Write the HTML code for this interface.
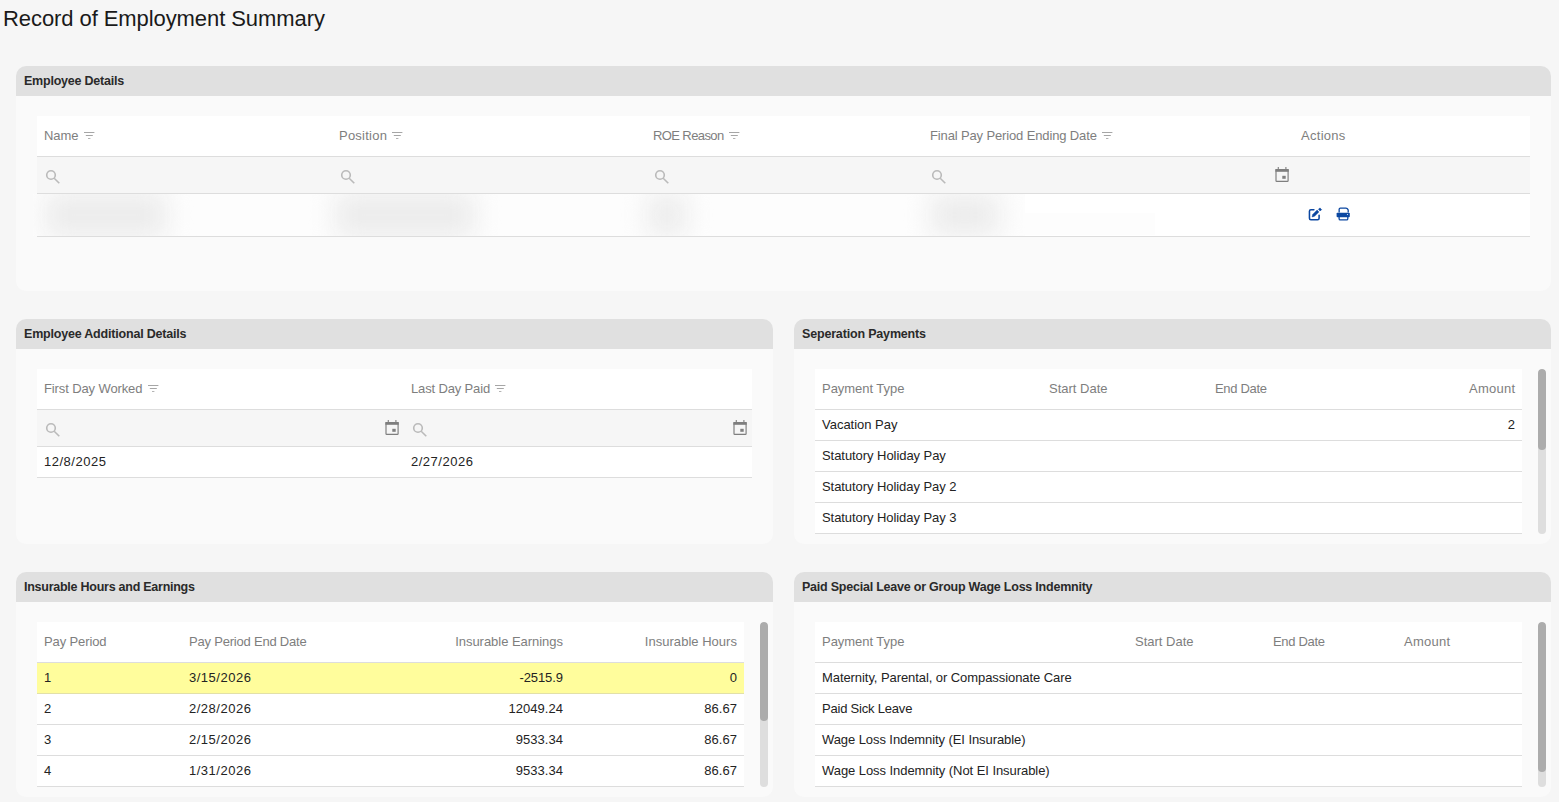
<!DOCTYPE html>
<html><head><meta charset="utf-8">
<style>
*{box-sizing:border-box;margin:0;padding:0}
html,body{width:1559px;height:802px;overflow:hidden;background:#f6f6f6;font-family:"Liberation Sans",sans-serif;color:#212121}
.ttl{position:absolute;font-size:22px;color:#1a1a1a;white-space:nowrap}
.card{position:absolute;background:#fafafa;border-radius:10px;overflow:hidden}
.chd{position:absolute;left:0;top:0;right:0;height:30px;background:#e0e0e0}
.hd{position:absolute;font-weight:bold;font-size:12.5px;color:#2a2a2a;white-space:nowrap}
.r{position:absolute}
.th{position:absolute;font-weight:normal;font-size:13px;color:#7e7e7e;white-space:nowrap}
.td{position:absolute;font-size:13px;color:#232323;white-space:nowrap}
.ic{position:absolute}
.sb{position:absolute;width:8px;border-radius:4px;background:#dedede;overflow:hidden}
.sb i{position:absolute;left:0;width:8px;border-radius:4px;background:#acacac}
.blob{position:absolute;background:#ececec;filter:blur(13px);border-radius:6px}
</style></head><body>

<div class="ttl" style="left:3px;top:5px;height:28px;line-height:28px;transform-origin:0 50%;letter-spacing:-0.077px;margin-right:0.077px">Record of Employment Summary</div>
<div class="card" style="left:16px;top:66px;width:1535px;height:225px"><div class="chd"></div></div>
<div class="hd" style="left:24px;top:66px;height:30px;line-height:30px;transform-origin:0 50%;letter-spacing:-0.226px;margin-right:0.226px">Employee Details</div>
<div class="r" style="left:37px;top:116px;width:1493px;height:40px;background:#fff"></div>
<div class="r" style="left:37px;top:156px;width:1493px;height:1px;background:#dddddd"></div>
<div class="r" style="left:37px;top:157px;width:1493px;height:36px;background:#f6f6f6"></div>
<div class="r" style="left:37px;top:193px;width:1493px;height:1px;background:#dddddd"></div>
<div class="r" style="left:37px;top:194px;width:1493px;height:42px;background:#fff"></div>
<div class="r" style="left:37px;top:236px;width:1493px;height:1px;background:#dddddd"></div>
<div class="r" style="left:1025px;top:213px;width:130px;height:22px;background:#fdfdfd"></div>
<div class="r" style="left:33px;top:194px;width:992px;height:42px;overflow:hidden;background:#fdfdfd"><div class="blob" style="left:12px;top:-2px;width:122px;height:46px"></div><div class="blob" style="left:302px;top:-2px;width:140px;height:46px"></div><div class="blob" style="left:614px;top:0px;width:40px;height:42px"></div><div class="blob" style="left:897px;top:0px;width:70px;height:42px"></div></div></div>
<div class="th" style="left:44px;top:116px;height:40px;line-height:40px;transform-origin:0 50%;letter-spacing:-0.052px;margin-right:0.052px">Name</div>
<svg class="ic" style="left:84px;top:132px" width="11" height="8" viewBox="0 0 11 8"><rect x="0" y="0" width="10.4" height="1" fill="#a6a6a6"/><rect x="1.8" y="3" width="7" height="1" fill="#a6a6a6"/><rect x="4" y="6" width="2.4" height="1" fill="#b4b4b4"/></svg>
<div class="th" style="left:339px;top:116px;height:40px;line-height:40px;transform-origin:0 50%;letter-spacing:0.230px;margin-right:-0.230px">Position</div>
<svg class="ic" style="left:392px;top:132px" width="11" height="8" viewBox="0 0 11 8"><rect x="0" y="0" width="10.4" height="1" fill="#a6a6a6"/><rect x="1.8" y="3" width="7" height="1" fill="#a6a6a6"/><rect x="4" y="6" width="2.4" height="1" fill="#b4b4b4"/></svg>
<div class="th" style="left:653px;top:116px;height:40px;line-height:40px;transform-origin:0 50%;letter-spacing:-0.602px;margin-right:0.602px">ROE Reason</div>
<svg class="ic" style="left:729px;top:132px" width="11" height="8" viewBox="0 0 11 8"><rect x="0" y="0" width="10.4" height="1" fill="#a6a6a6"/><rect x="1.8" y="3" width="7" height="1" fill="#a6a6a6"/><rect x="4" y="6" width="2.4" height="1" fill="#b4b4b4"/></svg>
<div class="th" style="left:930px;top:116px;height:40px;line-height:40px;transform-origin:0 50%;letter-spacing:-0.136px;margin-right:0.136px">Final Pay Period Ending Date</div>
<svg class="ic" style="left:1102px;top:132px" width="11" height="8" viewBox="0 0 11 8"><rect x="0" y="0" width="10.4" height="1" fill="#a6a6a6"/><rect x="1.8" y="3" width="7" height="1" fill="#a6a6a6"/><rect x="4" y="6" width="2.4" height="1" fill="#b4b4b4"/></svg>
<div class="th" style="left:1301px;top:116px;height:40px;line-height:40px;transform-origin:0 50%;letter-spacing:0.286px;margin-right:-0.286px">Actions</div>
<svg class="ic" style="left:43.8px;top:168.0px" width="17" height="17" viewBox="0 0 17 17"><circle cx="7" cy="7" r="4.3" fill="none" stroke="#bababa" stroke-width="1.6"/><path d="M10.2 10.2L15.3 15.2" stroke="#bababa" stroke-width="1.6"/></svg>
<svg class="ic" style="left:338.8px;top:168.0px" width="17" height="17" viewBox="0 0 17 17"><circle cx="7" cy="7" r="4.3" fill="none" stroke="#bababa" stroke-width="1.6"/><path d="M10.2 10.2L15.3 15.2" stroke="#bababa" stroke-width="1.6"/></svg>
<svg class="ic" style="left:652.8px;top:168.0px" width="17" height="17" viewBox="0 0 17 17"><circle cx="7" cy="7" r="4.3" fill="none" stroke="#bababa" stroke-width="1.6"/><path d="M10.2 10.2L15.3 15.2" stroke="#bababa" stroke-width="1.6"/></svg>
<svg class="ic" style="left:929.8px;top:168.0px" width="17" height="17" viewBox="0 0 17 17"><circle cx="7" cy="7" r="4.3" fill="none" stroke="#bababa" stroke-width="1.6"/><path d="M10.2 10.2L15.3 15.2" stroke="#bababa" stroke-width="1.6"/></svg>
<svg class="ic" style="left:1270.0px;top:162.1px" width="24" height="24" viewBox="0 0 24 24"><rect x="6" y="7.6" width="12.1" height="11.75" rx="0.7" fill="none" stroke="#7e7e7e" stroke-width="1.15"/><rect x="5.4" y="7" width="13.3" height="2.8" fill="#7e7e7e"/><rect x="7.7" y="5" width="1.2" height="2.1" fill="#888"/><rect x="15.3" y="5" width="1.2" height="2.1" fill="#888"/><rect x="12.3" y="13.8" width="3.4" height="3" fill="#808080"/></svg>
<svg class="ic" style="left:1302px;top:202px" width="54" height="24" viewBox="0 0 54 24">
<path d="M11.9 7.8H8.9c-.8 0-1.45.65-1.45 1.45v7.1c0 .8.65 1.45 1.45 1.45h6.75c.8 0 1.45-.65 1.45-1.45V13.3" fill="none" stroke="#0b47a1" stroke-width="1.55" stroke-linecap="round"/>
<path d="M10.1 14.9L10.7 12.5L15.1 8.1L16.9 9.9L12.5 14.3Z" fill="#0b47a1" stroke="#0b47a1" stroke-width="0.5" stroke-linejoin="round"/>
<path d="M19.6 7.6L17.9 5.9L16.5 7.3L18.2 9Z" fill="#0b47a1" stroke="#0b47a1" stroke-width="0.6" stroke-linejoin="round"/>
<path d="M37.15 10.6V7.3c0-.8.5-1.2 1.2-1.2h5.6c.5 0 .8.15 1.1.45l.7.7c.3.3.45.65.45 1.1V10.6" fill="none" stroke="#0b47a1" stroke-width="1.3"/>
<rect x="34.6" y="10.7" width="13.2" height="4.5" rx="0.9" fill="#0b47a1"/>
<circle cx="45.5" cy="12.5" r="0.6" fill="#e8f0ff"/>
<path d="M37.1 14.5v2.2c0 .7.5 1.2 1.2 1.2h6.3c.7 0 1.2-.5 1.2-1.2V14.5" fill="none" stroke="#0b47a1" stroke-width="1.3"/>
</svg>
<div class="card" style="left:16px;top:319px;width:757px;height:225px"><div class="chd"></div></div>
<div class="hd" style="left:24px;top:319px;height:30px;line-height:30px;transform-origin:0 50%;letter-spacing:-0.197px;margin-right:0.197px">Employee Additional Details</div>
<div class="r" style="left:37px;top:369px;width:715px;height:40px;background:#fff"></div>
<div class="r" style="left:37px;top:409px;width:715px;height:1px;background:#dddddd"></div>
<div class="r" style="left:37px;top:410px;width:715px;height:36px;background:#f6f6f6"></div>
<div class="r" style="left:37px;top:446px;width:715px;height:1px;background:#dddddd"></div>
<div class="r" style="left:37px;top:447px;width:715px;height:30px;background:#fff"></div>
<div class="r" style="left:37px;top:477px;width:715px;height:1px;background:#dddddd"></div>
<div class="th" style="left:44px;top:369px;height:40px;line-height:40px;transform-origin:0 50%;letter-spacing:-0.113px;margin-right:0.113px">First Day Worked</div>
<svg class="ic" style="left:148px;top:385px" width="11" height="8" viewBox="0 0 11 8"><rect x="0" y="0" width="10.4" height="1" fill="#a6a6a6"/><rect x="1.8" y="3" width="7" height="1" fill="#a6a6a6"/><rect x="4" y="6" width="2.4" height="1" fill="#b4b4b4"/></svg>
<div class="th" style="left:411px;top:369px;height:40px;line-height:40px;transform-origin:0 50%;letter-spacing:-0.148px;margin-right:0.148px">Last Day Paid</div>
<svg class="ic" style="left:495px;top:385px" width="11" height="8" viewBox="0 0 11 8"><rect x="0" y="0" width="10.4" height="1" fill="#a6a6a6"/><rect x="1.8" y="3" width="7" height="1" fill="#a6a6a6"/><rect x="4" y="6" width="2.4" height="1" fill="#b4b4b4"/></svg>
<svg class="ic" style="left:44.05px;top:421.0px" width="17" height="17" viewBox="0 0 17 17"><circle cx="7" cy="7" r="4.3" fill="none" stroke="#bababa" stroke-width="1.6"/><path d="M10.2 10.2L15.3 15.2" stroke="#bababa" stroke-width="1.6"/></svg>
<svg class="ic" style="left:411.05px;top:421.0px" width="17" height="17" viewBox="0 0 17 17"><circle cx="7" cy="7" r="4.3" fill="none" stroke="#bababa" stroke-width="1.6"/><path d="M10.2 10.2L15.3 15.2" stroke="#bababa" stroke-width="1.6"/></svg>
<svg class="ic" style="left:379.90000000000003px;top:415.20000000000005px" width="24" height="24" viewBox="0 0 24 24"><rect x="6" y="7.6" width="12.1" height="11.75" rx="0.7" fill="none" stroke="#7e7e7e" stroke-width="1.15"/><rect x="5.4" y="7" width="13.3" height="2.8" fill="#7e7e7e"/><rect x="7.7" y="5" width="1.2" height="2.1" fill="#888"/><rect x="15.3" y="5" width="1.2" height="2.1" fill="#888"/><rect x="12.3" y="13.8" width="3.4" height="3" fill="#808080"/></svg>
<svg class="ic" style="left:727.9px;top:415.20000000000005px" width="24" height="24" viewBox="0 0 24 24"><rect x="6" y="7.6" width="12.1" height="11.75" rx="0.7" fill="none" stroke="#7e7e7e" stroke-width="1.15"/><rect x="5.4" y="7" width="13.3" height="2.8" fill="#7e7e7e"/><rect x="7.7" y="5" width="1.2" height="2.1" fill="#888"/><rect x="15.3" y="5" width="1.2" height="2.1" fill="#888"/><rect x="12.3" y="13.8" width="3.4" height="3" fill="#808080"/></svg>
<div class="td" style="left:44px;top:447px;height:30px;line-height:30px;transform-origin:0 50%;letter-spacing:0.504px;margin-right:-0.504px">12/8/2025</div>
<div class="td" style="left:411px;top:447px;height:30px;line-height:30px;transform-origin:0 50%;letter-spacing:0.504px;margin-right:-0.504px">2/27/2026</div>
<div class="card" style="left:794px;top:319px;width:757px;height:225px"><div class="chd"></div></div>
<div class="hd" style="left:802px;top:319px;height:30px;line-height:30px;transform-origin:0 50%;letter-spacing:-0.174px;margin-right:0.174px">Seperation Payments</div>
<div class="r" style="left:815px;top:369px;width:707px;height:164px;background:#fff"></div>
<div class="r" style="left:815px;top:409px;width:707px;height:1px;background:#dddddd"></div>
<div class="r" style="left:815px;top:440px;width:707px;height:1px;background:#dddddd"></div>
<div class="r" style="left:815px;top:471px;width:707px;height:1px;background:#dddddd"></div>
<div class="r" style="left:815px;top:502px;width:707px;height:1px;background:#dddddd"></div>
<div class="r" style="left:815px;top:533px;width:707px;height:1px;background:#dddddd"></div>
<div class="th" style="left:822px;top:369px;height:40px;line-height:40px;transform-origin:0 50%;letter-spacing:-0.045px;margin-right:0.045px">Payment Type</div>
<div class="th" style="left:1049px;top:369px;height:40px;line-height:40px;transform-origin:0 50%;letter-spacing:-0.007px;margin-right:0.007px">Start Date</div>
<div class="th" style="left:1215px;top:369px;height:40px;line-height:40px;transform-origin:0 50%;letter-spacing:-0.324px;margin-right:0.324px">End Date</div>
<div class="th" style="right:44px;top:369px;height:40px;line-height:40px;text-align:right;transform-origin:100% 50%;letter-spacing:0.241px;margin-right:-0.241px">Amount</div>
<div class="td" style="left:822px;top:410px;height:30px;line-height:30px;transform-origin:0 50%;letter-spacing:-0.018px;margin-right:0.018px">Vacation Pay</div>
<div class="td" style="left:822px;top:441px;height:30px;line-height:30px;transform-origin:0 50%;letter-spacing:-0.058px;margin-right:0.058px">Statutory Holiday Pay</div>
<div class="td" style="left:822px;top:472px;height:30px;line-height:30px;transform-origin:0 50%;letter-spacing:-0.067px;margin-right:0.067px">Statutory Holiday Pay 2</div>
<div class="td" style="left:822px;top:503px;height:30px;line-height:30px;transform-origin:0 50%;letter-spacing:-0.067px;margin-right:0.067px">Statutory Holiday Pay 3</div>
<div class="td" style="right:44px;top:410px;height:30px;line-height:30px;text-align:right;transform-origin:100% 50%;letter-spacing:0.078px;margin-right:-0.078px">2</div>
<div class="sb" style="left:1538px;top:369px;height:165px"><i style="top:0;height:81px"></i></div>
<div class="card" style="left:16px;top:572px;width:757px;height:225px"><div class="chd"></div></div>
<div class="hd" style="left:24px;top:572px;height:30px;line-height:30px;transform-origin:0 50%;letter-spacing:-0.254px;margin-right:0.254px">Insurable Hours and Earnings</div>
<div class="r" style="left:37px;top:622px;width:707px;height:164px;background:#fff"></div>
<div class="r" style="left:37px;top:662px;width:707px;height:1px;background:#dddddd"></div>
<div class="r" style="left:37px;top:663px;width:707px;height:30px;background:#fffd9c"></div>
<div class="r" style="left:37px;top:693px;width:707px;height:1px;background:#e2e0a8"></div>
<div class="r" style="left:37px;top:724px;width:707px;height:1px;background:#dddddd"></div>
<div class="r" style="left:37px;top:755px;width:707px;height:1px;background:#dddddd"></div>
<div class="r" style="left:37px;top:786px;width:707px;height:1px;background:#dddddd"></div>
<div class="th" style="left:44px;top:622px;height:40px;line-height:40px;transform-origin:0 50%;letter-spacing:-0.118px;margin-right:0.118px">Pay Period</div>
<div class="th" style="left:189px;top:622px;height:40px;line-height:40px;transform-origin:0 50%;letter-spacing:-0.207px;margin-right:0.207px">Pay Period End Date</div>
<div class="th" style="right:996px;top:622px;height:40px;line-height:40px;text-align:right;transform-origin:100% 50%;letter-spacing:-0.034px;margin-right:0.034px">Insurable Earnings</div>
<div class="th" style="right:822px;top:622px;height:40px;line-height:40px;text-align:right;transform-origin:100% 50%;letter-spacing:0.026px;margin-right:-0.026px">Insurable Hours</div>
<div class="td" style="left:44px;top:663px;height:30px;line-height:30px;transform-origin:0 50%;letter-spacing:0.078px;margin-right:-0.078px">1</div>
<div class="td" style="left:189px;top:663px;height:30px;line-height:30px;transform-origin:0 50%;letter-spacing:0.504px;margin-right:-0.504px">3/15/2026</div>
<div class="td" style="right:996px;top:663px;height:30px;line-height:30px;text-align:right;transform-origin:100% 50%;letter-spacing:-0.089px;margin-right:0.089px">-2515.9</div>
<div class="td" style="right:822px;top:663px;height:30px;line-height:30px;text-align:right;transform-origin:100% 50%;letter-spacing:0.078px;margin-right:-0.078px">0</div>
<div class="td" style="left:44px;top:694px;height:30px;line-height:30px;transform-origin:0 50%;letter-spacing:0.078px;margin-right:-0.078px">2</div>
<div class="td" style="left:189px;top:694px;height:30px;line-height:30px;transform-origin:0 50%;letter-spacing:0.504px;margin-right:-0.504px">2/28/2026</div>
<div class="td" style="right:996px;top:694px;height:30px;line-height:30px;text-align:right;transform-origin:100% 50%;letter-spacing:0.049px;margin-right:-0.049px">12049.24</div>
<div class="td" style="right:822px;top:694px;height:30px;line-height:30px;text-align:right;transform-origin:100% 50%;letter-spacing:0.027px;margin-right:-0.027px">86.67</div>
<div class="td" style="left:44px;top:725px;height:30px;line-height:30px;transform-origin:0 50%;letter-spacing:0.078px;margin-right:-0.078px">3</div>
<div class="td" style="left:189px;top:725px;height:30px;line-height:30px;transform-origin:0 50%;letter-spacing:0.504px;margin-right:-0.504px">2/15/2026</div>
<div class="td" style="right:996px;top:725px;height:30px;line-height:30px;text-align:right;transform-origin:100% 50%;letter-spacing:0.044px;margin-right:-0.044px">9533.34</div>
<div class="td" style="right:822px;top:725px;height:30px;line-height:30px;text-align:right;transform-origin:100% 50%;letter-spacing:0.027px;margin-right:-0.027px">86.67</div>
<div class="td" style="left:44px;top:756px;height:30px;line-height:30px;transform-origin:0 50%;letter-spacing:0.078px;margin-right:-0.078px">4</div>
<div class="td" style="left:189px;top:756px;height:30px;line-height:30px;transform-origin:0 50%;letter-spacing:0.504px;margin-right:-0.504px">1/31/2026</div>
<div class="td" style="right:996px;top:756px;height:30px;line-height:30px;text-align:right;transform-origin:100% 50%;letter-spacing:0.044px;margin-right:-0.044px">9533.34</div>
<div class="td" style="right:822px;top:756px;height:30px;line-height:30px;text-align:right;transform-origin:100% 50%;letter-spacing:0.027px;margin-right:-0.027px">86.67</div>
<div class="sb" style="left:760px;top:622px;height:165px"><i style="top:0;height:99px"></i></div>
<div class="card" style="left:794px;top:572px;width:757px;height:225px"><div class="chd"></div></div>
<div class="hd" style="left:802px;top:572px;height:30px;line-height:30px;transform-origin:0 50%;letter-spacing:-0.227px;margin-right:0.227px">Paid Special Leave or Group Wage Loss Indemnity</div>
<div class="r" style="left:815px;top:622px;width:707px;height:164px;background:#fff"></div>
<div class="r" style="left:815px;top:662px;width:707px;height:1px;background:#dddddd"></div>
<div class="r" style="left:815px;top:693px;width:707px;height:1px;background:#dddddd"></div>
<div class="r" style="left:815px;top:724px;width:707px;height:1px;background:#dddddd"></div>
<div class="r" style="left:815px;top:755px;width:707px;height:1px;background:#dddddd"></div>
<div class="r" style="left:815px;top:786px;width:707px;height:1px;background:#dddddd"></div>
<div class="th" style="left:822px;top:622px;height:40px;line-height:40px;transform-origin:0 50%;letter-spacing:-0.045px;margin-right:0.045px">Payment Type</div>
<div class="th" style="left:1135px;top:622px;height:40px;line-height:40px;transform-origin:0 50%;letter-spacing:-0.007px;margin-right:0.007px">Start Date</div>
<div class="th" style="left:1273px;top:622px;height:40px;line-height:40px;transform-origin:0 50%;letter-spacing:-0.324px;margin-right:0.324px">End Date</div>
<div class="th" style="left:1404px;top:622px;height:40px;line-height:40px;transform-origin:0 50%;letter-spacing:0.241px;margin-right:-0.241px">Amount</div>
<div class="td" style="left:822px;top:663px;height:30px;line-height:30px;transform-origin:0 50%;letter-spacing:-0.073px;margin-right:0.073px">Maternity, Parental, or Compassionate Care</div>
<div class="td" style="left:822px;top:694px;height:30px;line-height:30px;transform-origin:0 50%;letter-spacing:-0.202px;margin-right:0.202px">Paid Sick Leave</div>
<div class="td" style="left:822px;top:725px;height:30px;line-height:30px;transform-origin:0 50%;letter-spacing:-0.081px;margin-right:0.081px">Wage Loss Indemnity (EI Insurable)</div>
<div class="td" style="left:822px;top:756px;height:30px;line-height:30px;transform-origin:0 50%;letter-spacing:-0.064px;margin-right:0.064px">Wage Loss Indemnity (Not EI Insurable)</div>
<div class="sb" style="left:1538px;top:622px;height:165px"><i style="top:0;height:150px"></i></div>
</body></html>
